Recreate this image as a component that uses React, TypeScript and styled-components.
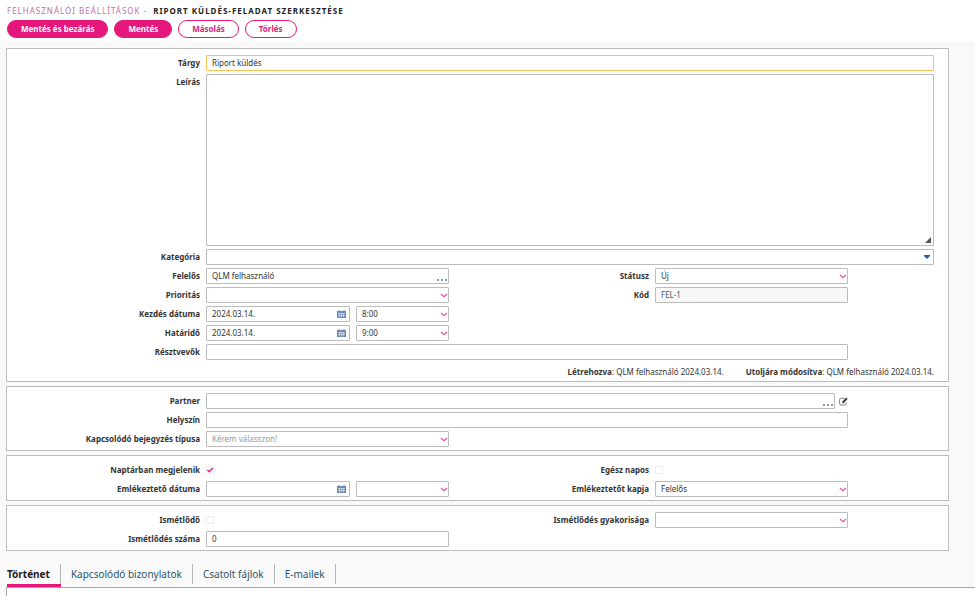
import React, { useState } from "react";
import styled, { createGlobalStyle, css } from "styled-components";

const GlobalStyle = createGlobalStyle`
  *, *::before, *::after { box-sizing: border-box; }
  html { background: #f9f9f9; }
  body {
    margin: 0;
    background: #f9f9f9;
    color: #333;
    font-family: "Noto Sans", "Open Sans", sans-serif;
    font-size: 8px;
    line-height: 12px;
  }
  button, input, select, textarea { font: inherit; color: inherit; margin: 0; }
`;

const pink = "#e5177b";
const line = "#bcbcbc";

const Page = styled.div`
  display: flex;
  flex-direction: column;
  min-height: 100vh;
`;

const Header = styled.header`
  background: #fff;
  padding: 5px 7px 3px;
`;

const Crumbs = styled.div`
  display: flex;
  gap: 6px;
  letter-spacing: 1px;
  text-transform: uppercase;
  white-space: nowrap;
`;

const Crumb = styled.a`
  color: #c070a0;
  text-decoration: none;
`;

const Title = styled.h1`
  margin: 0;
  font-size: 8px;
  font-weight: 700;
  color: #222;
`;

const Toolbar = styled.div`
  display: flex;
  gap: 6px;
  margin-top: 3px;
`;

const PillButton = styled.button<{ $filled?: boolean }>`
  height: 18px;
  padding: 0 13px;
  border: 1px solid ${pink};
  border-radius: 9px;
  background: ${(p) => (p.$filled ? pink : "#fff")};
  color: ${(p) => (p.$filled ? "#fff" : pink)};
  font-weight: 700;
  line-height: 14px;
  cursor: pointer;
`;

const Form = styled.form`
  display: flex;
  flex-direction: column;
  gap: 4px;
  margin: 7px 26px 0 6px;
`;

const Panel = styled.section`
  display: flex;
  flex-direction: column;
  gap: 3px;
  padding: 6px 14px 3px 0;
  border: 1px solid ${line};
  background: #fff;
`;

const Row = styled.div`
  display: grid;
  grid-template-columns:
    minmax(0, 193fr) minmax(0, 243fr) minmax(0, 194fr)
    minmax(0, 193fr) minmax(0, 80fr);
  column-gap: 6px;
  min-height: 16px;
`;

const Label = styled.label`
  padding-top: 2px;
  font-weight: 700;
  text-align: right;
  white-space: nowrap;
`;

const Cell = styled.div<{ $span?: number }>`
  display: flex;
  gap: 6px;
  min-width: 0;
  grid-column: span ${(p) => p.$span ?? 1};
`;

const box = css`
  display: block;
  width: 100%;
  border: 1px solid ${line};
  border-radius: 1px;
  background: #fff;
  color: #333;
  outline: none;
`;

const TextInput = styled.input<{ $active?: boolean }>`
  ${box}
  height: 16px;
  padding: 0 5px 2px;
  border-color: ${(p) => (p.$active ? "#fcc25a" : line)};

  &:read-only { background: #f8f8f8; color: #555; }
`;

const TextArea = styled.textarea`
  ${box}
  height: 172px;
  padding: 2px 5px;
  resize: none;
`;

const SelectBox = styled.select<{ $muted?: boolean }>`
  ${box}
  height: 16px;
  padding: 0 14px 0 5px;
  appearance: none;
  color: ${(p) => (p.$muted ? "#999" : "#333")};
`;

const Control = styled.div<{ $grow?: number }>`
  position: relative;
  flex: ${(p) => p.$grow ?? 1} 1 0;
  min-width: 0;
`;

const Adornment = styled.span<{ $right: number; $bottom: number }>`
  position: absolute;
  right: ${(p) => p.$right}px;
  bottom: ${(p) => p.$bottom}px;
  display: flex;
  pointer-events: none;
`;

const IconButton = styled.button`
  display: flex;
  align-items: center;
  padding: 0;
  border: 0;
  background: none;
  cursor: pointer;
`;

const LookupButton = styled(IconButton)`
  position: absolute;
  right: 2px;
  bottom: 3px;
`;

const CalendarButton = styled(IconButton)`
  position: absolute;
  right: 4px;
  bottom: 4px;
`;

const LookupCell = styled(Cell)`
  gap: 4px;
`;

const CheckInput = styled.input`
  appearance: none;
  display: block;
  width: 8px;
  height: 8px;
  border: 1px solid #ededed;
  border-radius: 1px;
  background: #fff;
`;

const CheckWrap = styled.span`
  position: relative;
  align-self: center;
`;

const CheckMark = styled.svg`
  position: absolute;
  inset: 0;
  pointer-events: none;
`;

const Audit = styled.div`
  display: flex;
  justify-content: flex-end;
  gap: 22px;
  padding-top: 3px;
  white-space: nowrap;
`;

const TabBar = styled.nav`
  display: flex;
  margin: 13px 0 0 7px;
`;

const Tab = styled.button<{ $active?: boolean }>`
  height: 23px;
  padding: 0;
  border: 0;
  border-bottom: 3px solid ${(p) => (p.$active ? pink : "transparent")};
  background: none;
  color: ${(p) => (p.$active ? "#1c1c1c" : "#2f5468")};
  font-size: 10px;
  font-weight: ${(p) => (p.$active ? 700 : 400)};
  white-space: nowrap;
  cursor: pointer;

  span {
    display: block;
    height: 20px;
    padding: ${(p) => (p.$active ? "0 10px 0 0" : "0 10px")};
    border-right: 1px solid #b5b5b5;
    line-height: 20px;
  }
`;

const TabPanel = styled.div`
  flex: 1;
  min-height: 8px;
  margin-left: 6px;
  border: 1px solid #a8a8a8;
  border-width: 1px 0 0 1px;
  background: #fff;
`;

const Chevron = () => (
  <svg width="8" height="5" viewBox="0 0 8 5" fill="none">
    <path d="M1 1 L4 3.8 L7 1" stroke="#ee4f9e" strokeWidth="1.2" />
  </svg>
);

const Dots = () => (
  <svg width="10" height="2" viewBox="0 0 10 2" fill="#7f9cc0">
    <rect x="0" width="2" height="2" />
    <rect x="4" width="2" height="2" />
    <rect x="8" width="2" height="2" />
  </svg>
);

const Calendar = () => (
  <svg width="9" height="8" viewBox="0 0 9 8">
    <path d="M0 1h1.5V0h1v1h4V0h1v1H9v7H0z" fill="#6d8db5" />
    <path
      d="M1 3.5h7M1 5.5h7M2.5 3v4.3M4.5 3v4.3M6.5 3v4.3"
      stroke="#e4ebf3"
      strokeWidth="0.6"
    />
  </svg>
);

const Pencil = () => (
  <svg width="9" height="9" viewBox="0 0 9 9" fill="none">
    <path
      d="M5.5 1.3H1.8Q.6 1.3 .6 2.5v4.3Q.6 8 1.8 8h4.1Q7.1 8 7.1 6.8V5.4"
      stroke="#777"
      strokeWidth="0.9"
    />
    <path d="M3.2 6.3V4.6L7.2.6l1.5 1.5-4 4.2z" fill="#444" />
  </svg>
);

type FieldProps = { id: string; label: string };

const Select = ({
  id,
  value = "",
  title,
  muted,
  grow,
}: {
  id: string;
  value?: string;
  title?: string;
  muted?: boolean;
  grow?: number;
}) => (
  <Control $grow={grow}>
    <SelectBox id={id} aria-label={title} $muted={muted} defaultValue={value}>
      <option value={value}>{value}</option>
    </SelectBox>
    <Adornment $right={1} $bottom={5}>
      <Chevron />
    </Adornment>
  </Control>
);

const SelectField = ({ id, label, value, muted }: FieldProps & { value?: string; muted?: boolean }) => (
  <>
    <Label htmlFor={id}>{label}</Label>
    <Cell>
      <Select id={id} value={value} muted={muted} />
    </Cell>
  </>
);

const TextField = ({
  id,
  label,
  value,
  span,
  active,
  readOnly,
}: FieldProps & { value?: string; span?: number; active?: boolean; readOnly?: boolean }) => (
  <>
    <Label htmlFor={id}>{label}</Label>
    <Cell $span={span}>
      <TextInput id={id} defaultValue={value} $active={active} readOnly={readOnly} />
    </Cell>
  </>
);

const DateTimeField = ({ id, label, date, time }: FieldProps & { date?: string; time?: string }) => (
  <>
    <Label htmlFor={id}>{label}</Label>
    <Cell>
      <Control $grow={144}>
        <TextInput id={id} defaultValue={date} />
        <CalendarButton type="button" aria-label={label}>
          <Calendar />
        </CalendarButton>
      </Control>
      <Select id={id + "-time"} title={label} value={time} grow={93} />
    </Cell>
  </>
);

const CheckField = ({ id, label, initial = false }: FieldProps & { initial?: boolean }) => {
  const [on, setOn] = useState(initial);
  return (
    <>
      <Label htmlFor={id}>{label}</Label>
      <Cell>
        <CheckWrap>
          <CheckInput id={id} type="checkbox" checked={on} onChange={() => setOn(!on)} />
          {on && (
            <CheckMark width="8" height="8" viewBox="0 0 8 8" fill="none">
              <path d="M1.4 4 L3.2 5.8 L6.7 2" stroke={pink} strokeWidth="1.3" />
            </CheckMark>
          )}
        </CheckWrap>
      </Cell>
    </>
  );
};

const tabs = ["Történet", "Kapcsolódó bizonylatok", "Csatolt fájlok", "E-mailek"];

export default function App() {
  const [tab, setTab] = useState(tabs[0]);
  return (
    <Page>
      <GlobalStyle />
      <Header>
        <Crumbs>
          <Crumb href="#beallitasok">Felhasználói beállítások -</Crumb>
          <Title>Riport küldés-feladat szerkesztése</Title>
        </Crumbs>
        <Toolbar>
          <PillButton type="button" $filled>Mentés és bezárás</PillButton>
          <PillButton type="button" $filled>Mentés</PillButton>
          <PillButton type="button">Másolás</PillButton>
          <PillButton type="button">Törlés</PillButton>
        </Toolbar>
      </Header>

      <Form>
        <Panel>
          <Row>
            <TextField id="subject" label="Tárgy" value="Riport küldés" span={4} active />
          </Row>
          <Row>
            <Label htmlFor="description">Leírás</Label>
            <Cell $span={4}>
              <Control>
                <TextArea id="description" />
                <Adornment $right={3} $bottom={3}>
                  <svg width="6" height="6" viewBox="0 0 6 6">
                    <path d="M6 0V6H0z" fill="#555" />
                  </svg>
                </Adornment>
              </Control>
            </Cell>
          </Row>
          <Row>
            <Label htmlFor="category">Kategória</Label>
            <Cell $span={4}>
              <Control>
                <SelectBox id="category" defaultValue="">
                  <option value=""></option>
                </SelectBox>
                <Adornment $right={4} $bottom={6}>
                  <svg width="6" height="4" viewBox="0 0 6 4">
                    <path d="M0 0H6V1L3 4L0 1z" fill="#2b5ca8" />
                  </svg>
                </Adornment>
              </Control>
            </Cell>
          </Row>
          <Row>
            <Label htmlFor="owner">Felelős</Label>
            <Cell>
              <Control>
                <TextInput id="owner" defaultValue="QLM felhasználó" />
                <LookupButton type="button" aria-label="Felelős">
                  <Dots />
                </LookupButton>
              </Control>
            </Cell>
            <SelectField id="status" label="Státusz" value="Új" />
          </Row>
          <Row>
            <SelectField id="priority" label="Prioritás" />
            <TextField id="code" label="Kód" value="FEL-1" readOnly />
          </Row>
          <Row>
            <DateTimeField id="start" label="Kezdés dátuma" date="2024.03.14." time="8:00" />
          </Row>
          <Row>
            <DateTimeField id="due" label="Határidő" date="2024.03.14." time="9:00" />
          </Row>
          <Row>
            <TextField id="participants" label="Résztvevők" span={3} />
          </Row>
          <Audit>
            <span><b>Létrehozva</b>: QLM felhasználó 2024.03.14.</span>
            <span><b>Utoljára módosítva</b>: QLM felhasználó 2024.03.14.</span>
          </Audit>
        </Panel>

        <Panel>
          <Row>
            <Label htmlFor="partner">Partner</Label>
            <LookupCell $span={3}>
              <Control>
                <TextInput id="partner" />
                <LookupButton type="button" aria-label="Partner">
                  <Dots />
                </LookupButton>
              </Control>
              <IconButton type="button" aria-label="Partner">
                <Pencil />
              </IconButton>
            </LookupCell>
          </Row>
          <Row>
            <TextField id="place" label="Helyszín" span={3} />
          </Row>
          <Row>
            <SelectField id="related" label="Kapcsolódó bejegyzés típusa" value="Kérem válasszon!" muted />
          </Row>
        </Panel>

        <Panel>
          <Row>
            <CheckField id="calendar" label="Naptárban megjelenik" initial />
            <CheckField id="allday" label="Egész napos" />
          </Row>
          <Row>
            <DateTimeField id="reminder" label="Emlékeztető dátuma" />
            <SelectField id="recipient" label="Emlékeztetőt kapja" value="Felelős" />
          </Row>
        </Panel>

        <Panel>
          <Row>
            <CheckField id="repeat" label="Ismétlődő" />
            <SelectField id="frequency" label="Ismétlődés gyakorisága" />
          </Row>
          <Row>
            <TextField id="count" label="Ismétlődés száma" value="0" />
          </Row>
        </Panel>
      </Form>

      <TabBar>
        {tabs.map((name) => (
          <Tab key={name} type="button" $active={name === tab} onClick={() => setTab(name)}>
            <span>{name}</span>
          </Tab>
        ))}
      </TabBar>
      <TabPanel />
    </Page>
  );
}
